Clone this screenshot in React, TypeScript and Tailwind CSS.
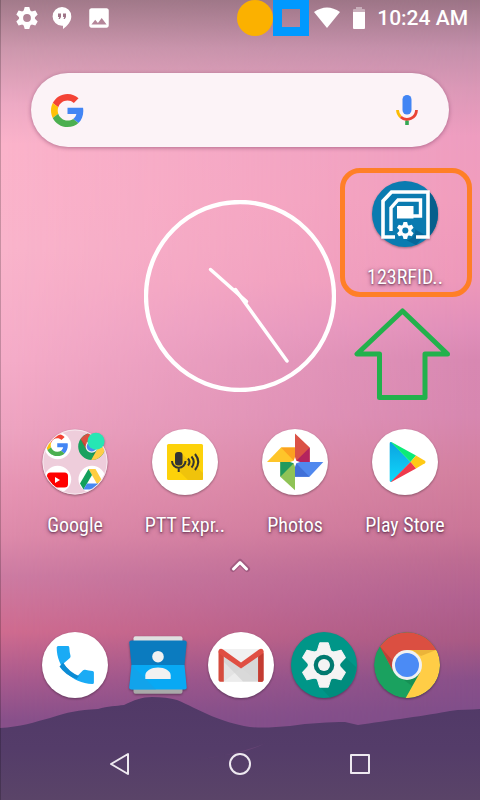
import type { ReactNode } from "react";
import { MdImage } from "react-icons/md";

interface AppEntry {
  name: string;
  icon: ReactNode;
}

const TOOTH_ANGLES = [0, 60, 120, 180, 240, 300];

function GoogleMark() {
  return (
    <>
      <path fill="#f44336" d="M24 9.5c3.54 0 6.71 1.22 9.21 3.6l6.85-6.85C35.9 2.38 30.47 0 24 0 14.62 0 6.51 5.38 2.56 13.22l7.98 6.19C12.43 13.72 17.74 9.5 24 9.5z" />
      <path fill="#4285f4" d="M46.98 24.55c0-1.57-.15-3.09-.38-4.55H24v9.02h12.94c-.58 2.96-2.26 5.48-4.78 7.18l7.73 6c4.51-4.18 7.09-10.36 7.09-17.65z" />
      <path fill="#ffc107" d="M10.53 28.59c-.48-1.45-.76-2.99-.76-4.59s.27-3.14.76-4.59l-7.98-6.19C.92 16.46 0 20.12 0 24c0 3.88.92 7.54 2.56 10.78l7.97-6.19z" />
      <path fill="#4caf50" d="M24 48c6.48 0 11.93-2.13 15.89-5.81l-7.73-6c-2.15 1.45-4.92 2.3-8.16 2.3-6.26 0-11.57-4.22-13.47-9.91l-7.98 6.19C6.51 42.62 14.62 48 24 48z" />
    </>
  );
}

function ChromeMark() {
  return (
    <>
      <circle cx="33" cy="33" r="33" fill="#1aa15f" />
      <path d="M31.7 66 46 40.5 26 45l12 9z" fill="#12804b" opacity="0.5" />
      <path d="M62.4 18A33 33 0 0 1 31.7 66L46 40.5 33 18z" fill="#ffcd46" />
      <path d="M6 14.5A33 33 0 0 1 62.4 18H33L19 39z" fill="#db4f41" />
      <path d="M6 14.5 19 38.5V29z" fill="#a83a30" opacity="0.6" />
      <path d="M62 18H38l9 6z" fill="#d99b2b" opacity="0.5" />
      <circle cx="33" cy="33" r="15" fill="#f1f1f1" />
      <circle cx="33" cy="33" r="12" fill="#4b8bf5" />
    </>
  );
}

function AppSvg({ children }: { children: ReactNode }) {
  return (
    <svg viewBox="0 0 66 66" className="size-[66px] overflow-visible drop-shadow-[0_1px_1px_rgba(0,0,0,0.35)]" aria-hidden="true">
      {children}
    </svg>
  );
}

function RfidIcon() {
  return (
    <AppSvg>
      <circle cx="33" cy="33" r="33" fill="#0a7bb0" />
      <path d="M57 10.3A33 33 0 0 1 57 55.7z" fill="#065f8c" />
      <path d="M39 46 53 54 44 64 30 57z" fill="#066799" />
      <g fill="none" stroke="#fff">
        <path d="M23 56H11V20l8.5-9H56v45H44" strokeWidth="3.6" />
        <path d="M19 50V27l7-8h22.5v16H40" strokeWidth="3.4" />
      </g>
      <path d="M25 25h16.5v12.5H25z" fill="#fff" />
      <circle cx="33.3" cy="49.5" r="10" fill="#0a7bb0" />
      <g transform="translate(33.3 49.5)">
        <g fill="#fff">
          {TOOTH_ANGLES.map((a) => (
            <path key={a} d="M-1.8-8.5h3.6L3-4H-3z" transform={`rotate(${a})`} />
          ))}
          <circle r="6" />
        </g>
        <circle r="3" fill="#0a7bb0" />
      </g>
    </AppSvg>
  );
}

function FolderIcon() {
  return (
    <AppSvg>
      <clipPath id="folder">
        <circle cx="33" cy="33" r="32" />
      </clipPath>
      <circle cx="33" cy="33" r="32.5" fill="#eecddb" />
      <g clipPath="url(#folder)">
        <circle cx="15.7" cy="16.7" r="13.5" fill="#fff" />
        <g transform="translate(4.2 5) scale(0.46)">
          <GoogleMark />
        </g>
        <g transform="translate(36.2 4) scale(0.41)">
          <ChromeMark />
        </g>
        <circle cx="15.7" cy="50.3" r="13.5" fill="#fff" />
        <rect x="5" y="43.5" width="21" height="15" rx="3.5" fill="#f00" />
        <path d="m13 48 5 3-5 3z" fill="#fff" />
        <circle cx="50" cy="50.3" r="13.5" fill="#fff" />
        <path d="M46.5 40h7l8.5 15h-7z" fill="#ffcd42" />
        <path d="m46.5 40-8.5 14.5 3.5 6 8.500-14.5z" fill="#12a05c" />
        <path d="M45 54.5h17l-3.5 6h-17z" fill="#4688f1" />
      </g>
      <circle cx="33" cy="33" r="32" fill="none" stroke="#f7e8ee" />
      <circle cx="54" cy="12.3" r="8.5" fill="#26e6b4" />
    </AppSvg>
  );
}

function PttIcon() {
  return (
    <AppSvg>
      <circle cx="33" cy="33" r="33" fill="#fff" />
      <rect x="15" y="15" width="36" height="36" rx="1.5" fill="#fdd20a" />
      <path d="M30 25 51 44v7H36l-9-9z" fill="#e8b90b" opacity="0.6" />
      <rect x="23" y="23" width="7.5" height="13.5" rx="3" fill="#333" />
      <g fill="none" stroke="#333" strokeWidth="2">
        <path d="M20 32a6.7 6.7 0 0 0 13.5 0M26.7 38.5V43" />
        <path d="M36 29.5q3 3.5 0 7M39.5 27.5q4.5 5.5 0 11M43 25q6.5 8 0 16" />
      </g>
    </AppSvg>
  );
}

function PhotosIcon() {
  return (
    <AppSvg>
      <circle cx="33" cy="33" r="33" fill="#fff" />
      <path d="M33 4.5 47.7 18.5V33H33z" fill="#db5246" />
      <path d="M47.7 18.5V33H33z" fill="#b3245e" />
      <path d="M5 33 19 18.5h14V33z" fill="#fec52a" />
      <path d="M19 18.5h14V33z" fill="#fca120" />
      <path d="M61.3 33 47.5 47.7H33V33z" fill="#5088ee" />
      <path d="M33 33v14.7h14.5z" fill="#4170d8" />
      <path d="M33 61.3 18.3 47.7V33H33z" fill="#8fc356" />
      <path d="M18.3 47.7V33H33z" fill="#219a5d" />
      <path d="m33 28 1.3 3.7L38 33l-3.7 1.3L33 38l-1.3-3.7L28 33l3.7-1.3z" fill="#fff" />
    </AppSvg>
  );
}

function PlayIcon() {
  return (
    <AppSvg>
      <linearGradient id="playBlue" x1="0" y1="0" x2="0" y2="1">
        <stop offset="0" stopColor="#0ba3e0" />
        <stop offset="1" stopColor="#10d8fb" />
      </linearGradient>
      <circle cx="33" cy="33" r="33" fill="#fff" />
      <path d="M17.7 14.5q0-2 1.8-1.2L38.5 33 19.5 52.7q-1.8.8-1.8-1.2z" fill="url(#playBlue)" />
      <path d="M18.7 13.1q.8-.2 1.6.3L44 26.5 38.5 33z" fill="#0ceb79" />
      <path d="m44 26.5 8.8 5.2q1.8 1.3 0 2.6L44 39.5 38.5 33z" fill="#ffc915" />
      <path d="M18.7 52.9q.8.2 1.6-.3L44 39.5 38.5 33z" fill="#ee3a4c" />
    </AppSvg>
  );
}

function PhoneIcon() {
  return (
    <AppSvg>
      <circle cx="33" cy="33" r="33" fill="#fff" />
      <path d="M14.7 15.500q0-1.500 1.500-1.500h9.600q1.400 0 1.500 1.400.2 4.800 1.200 8.300.3 1.300-.6 2.200L21.500 31.500q5 8.500 14 12.500l5.300-5.500q1-.9 2.300-.7 3.500.9 7.400 1.100 1.400.2 1.400 1.600v9.900q0 1.500-1.500 1.500C29.500 51.500 14.700 35 14.700 15.500z" fill="#1aabf5" />
      <path d="m21 30.500q6 9.500 16 13.500L34.500 47q-11.500-4-17-12.500z" fill="#0c8bd4" />
    </AppSvg>
  );
}

function ContactsIcon() {
  return (
    <AppSvg>
      <rect x="8.500" y="4.300" width="49" height="12" rx="2" fill="#e0e0e0" />
      <rect x="8.500" y="50" width="49" height="11.700" rx="2" fill="#a9a9a9" />
      <path d="M4.3 10.5q0-2 2-2h53.4q2 0 2 2L59.5 33h-53z" fill="#0b7bbf" />
      <path d="M6.5 33h53l2.2 22.5q0 2-2 2H6.3q-2 0-2-2z" fill="#08a9f4" />
      <path d="M6.5 33 31 57.5H6.300q-2 0-2-2z" fill="#1c9de2" opacity="0.5" />
      <circle cx="33" cy="24.7" r="5.8" fill="#f1f1f1" />
      <path d="M20.3 47v-3.5c0-4.500 6-8 12.700-8s12.700 3.500 12.700 8V47z" fill="#f1f1f1" />
    </AppSvg>
  );
}

function GmailIcon() {
  return (
    <AppSvg>
      <circle cx="33" cy="33" r="33" fill="#fff" />
      <path d="M12 17h42v32.5H12z" fill="#e3e3e3" />
      <path d="M13 17h40L33 32z" fill="#f1f1f1" />
      <path d="m33 36 17 13.5H16z" fill="#ececec" />
      <path d="M16 24v6l19 19.5h15V24L33 36z" fill="#d2d2d2" opacity="0.7" />
      <path d="M10.5 19v29q0 1.7 1.7 1.7h3.6V24zM55.5 19v29q0 1.7-1.7 1.7h-3.6V24z" fill="#d54b3d" />
      <path d="M10.5 19.5q0-2.8 2.5-2.8 1 0 2 .8l18 13 18-13q1-.8 2-.8 2.5 0 2.5 2.8-.1 1.5-1.3 2.5L33 36.5 11.8 22q-1.2-1-1.3-2.5z" fill="#e04f43" />
      <path d="M50.2 25v24.7h3.6q1.7 0 1.7-1.7V21z" fill="#c33c32" />
    </AppSvg>
  );
}

function SettingsIcon() {
  return (
    <AppSvg>
      <circle cx="33" cy="33" r="33" fill="#009688" />
      <path d="M50 21 65 35A33 33 0 0 1 39 65.5L29 55z" fill="#008577" opacity="0.6" />
      <g transform="translate(33 33)">
        <g fill="#f4f4f4" stroke="#f4f4f4" strokeWidth="1" strokeLinejoin="round">
          {TOOTH_ANGLES.map((a) => (
            <path key={a} d="M-4.3-22.2h8.6L6.5-15 9-12H-9l2.5-3z" transform={`rotate(${a})`} />
          ))}
          <circle r="15.5" />
        </g>
        <circle r="10.3" fill="#00796f" />
        <circle r="6" fill="#f4f4f4" />
      </g>
    </AppSvg>
  );
}

function ChromeIcon() {
  return (
    <AppSvg>
      <clipPath id="chromeDisc">
        <circle cx="33" cy="33" r="33" />
      </clipPath>
      <g clipPath="url(#chromeDisc)">
        <ChromeMark />
      </g>
    </AppSvg>
  );
}

const homeApps: AppEntry[] = [
  { name: "Google", icon: <FolderIcon /> },
  { name: "PTT Expr..", icon: <PttIcon /> },
  { name: "Photos", icon: <PhotosIcon /> },
  { name: "Play Store", icon: <PlayIcon /> },
];

const dockApps: AppEntry[] = [
  { name: "Phone", icon: <PhoneIcon /> },
  { name: "Contacts", icon: <ContactsIcon /> },
  { name: "Gmail", icon: <GmailIcon /> },
  { name: "Settings", icon: <SettingsIcon /> },
  { name: "Chrome", icon: <ChromeIcon /> },
];

function AppShortcut({ name, icon }: AppEntry) {
  return (
    <button className="flex w-full flex-col items-center gap-[18px]">
      {icon}
      <span className="whitespace-nowrap font-['Roboto_Condensed','Liberation_Sans_Narrow',Roboto,sans-serif] text-xl leading-6 text-white [text-shadow:0_1px_2px_rgba(60,20,50,0.6),0_1px_4px_rgba(60,20,50,0.6)]">
        {name}
      </span>
    </button>
  );
}

function StatusBar() {
  return (
    <header className="flex h-9 items-center justify-between pl-4 pr-3 text-white">
      <div className="flex items-center gap-[14px]">
        <svg viewBox="-11 -11 22 22" className="size-[22px]" aria-hidden="true">
          <path
            d="M0-8A8 8 0 1 1 0 8 8 8 0 1 1 0-8zM0-3.900A3.900 3.900 0 1 0 0 3.900 3.900 3.900 0 1 0 0-3.900z"
            fill="#fff"
            fillRule="evenodd"
          />
          {TOOTH_ANGLES.map((a) => (
            <path key={a} d="M-2.300-11h4.600L3.600-6.500H-3.600z" fill="#fff" transform={`rotate(${a})`} />
          ))}
        </svg>
        <svg viewBox="0 0 20 24" className="h-6 w-5" aria-hidden="true">
          <path d="M10 1a9.3 9.3 0 0 1 9.3 9.5c0 5-4 9.5-8.3 12.5v-3.2h-1A9.4 9.4 0 0 1 10 1z" fill="#fff" />
          <path d="M6 7.5h3v3.5l-1.2 2H6.5l.8-2H6zM11 7.5h3v3.5l-1.2 2h-1.3l.8-2H11z" fill="#9f7588" />
        </svg>
        <MdImage className="size-[26px]" />
      </div>
      <div className="flex items-center">
        <span className="size-9 rounded-full bg-[#fbb100]" />
        <span className="size-9 border-9 border-[#0099ff]" />
        <svg viewBox="0 0 26 22" className="ml-[5px] h-[22px] w-[26px]" aria-hidden="true">
          <path d="M0 5Q13-4 26 5L13 21z" fill="#fff" />
        </svg>
        <svg viewBox="0 0 12 22" className="ml-[13px] h-[22px] w-3" aria-hidden="true">
          <path d="M0 5V3q0-1 1-1h2V0h6v2h2q1 0 1 1v2z" fill="#fff" opacity="0.4" />
          <path d="M0 5h12v16q0 1-1 1H1q-1 0-1-1z" fill="#fff" />
        </svg>
        <time className="ml-3 whitespace-nowrap text-[21px] font-medium leading-6">10:24 AM</time>
      </div>
    </header>
  );
}

function SearchBar() {
  return (
    <form className="mx-[31px] mt-[37px] flex h-[74px] items-center rounded-full bg-[#fcf3f7] pl-5 pr-[27px] shadow-[0_1px_4px_rgba(80,20,60,0.4)]">
      <svg viewBox="0 0 48 48" className="size-[33px] shrink-0" aria-hidden="true">
        <GoogleMark />
      </svg>
      <input type="text" aria-label="Search" className="h-full min-w-0 flex-1 bg-transparent px-4 text-xl outline-none" />
      <button type="button" aria-label="Voice search">
        <svg viewBox="0 0 30 32" className="h-8 w-[30px]" aria-hidden="true">
          <rect x="10.5" y="1" width="9" height="19.5" rx="4.5" fill="#4285f4" />
          <g fill="none" strokeWidth="2.8">
            <path d="M5.5 16a9.5 9.5 0 0 0 3.200 7" stroke="#fbbc05" />
            <path d="M8.700 23A9.500 9.500 0 0 0 24.500 16" stroke="#ea4335" />
            <path d="M15 26.700V31" stroke="#34a853" strokeWidth="3.600" />
          </g>
        </svg>
      </button>
    </form>
  );
}

function Clock() {
  return (
    <svg viewBox="0 0 192 192" className="col-span-2 col-start-2 mt-[19px] size-48 justify-self-center" role="img" aria-label="10:24">
      <g fill="none" stroke="#fff" strokeLinecap="round">
        <circle cx="96" cy="96" r="94" strokeWidth="4.3" />
        <path d="m66.500 69.500 36 32" strokeWidth="3.5" />
        <path d="m91.500 89.500 51.500 71.500" strokeWidth="3.5" />
      </g>
    </svg>
  );
}

function Wallpaper() {
  return (
    <div className="absolute inset-0 bg-[linear-gradient(180deg,#9c7486_0%,#c48fab_6%,#db98b7_11%,#ee9dc0_17%,#f19dbd_25%,#ee98ba_35%,#e18fba_41%,#d888b2_45%,#d787b0_52%,#d3809f_59%,#cb7698_66%,#bd6b92_70%,#b16190_75%,#a95a85_80%,#89508a_85%,#804e8a_89%)]">
      {/* Pinker sky on the left, fading out towards the right edge */}
      <div className="absolute inset-0 bg-[linear-gradient(180deg,#a27a8a_0%,#cc97ac_6%,#edaac4_13%,#fbb3ca_18%,#f9b4cb_31%,#f5acc8_45%,#eda3c0_54%,#e694b3_61%,#dd8aaa_67%,#cc7ba2_72%,#cf6b8f_79%,#a85a8d_85%,#88508a_90%)] [mask-image:linear-gradient(to_right,black,transparent)]" />
      <svg viewBox="0 0 480 104" preserveAspectRatio="none" className="absolute inset-x-0 bottom-0 h-[104px] w-full" aria-hidden="true">
        <linearGradient id="hill" x1="0" y1="0" x2="0" y2="1">
          <stop offset="0" stopColor="#513967" />
          <stop offset="0.5" stopColor="#543c69" />
          <stop offset="1" stopColor="#5a4468" />
        </linearGradient>
        <path
          d="M0 32C20 31 35 26 50 22C68 16 78 14 98 13C108 10 116 10 124 9C134 4 142 1 152 1C162 1 170 2 177 4C200 14 215 24 244 30C258 33 275 31 290 30C310 27 330 26 345 26L358 29C385 25 430 19 450 15C460 13 470 14 480 13V104H0z"
          fill="url(#hill)"
        />
        <path d="M196 64Q240 58 266 47Q248 56 225 59z" fill="#7a4d80" opacity="0.5" />
      </svg>
      <div className="absolute inset-y-0 left-0 w-px bg-black/20" />
    </div>
  );
}

function NavBar() {
  return (
    <nav className="mb-3 mt-auto grid grid-cols-3 px-[60px] pt-[42px]">
      <button aria-label="Back" className="flex h-12 items-center justify-center">
        <svg viewBox="0 0 24 24" className="size-6" fill="none" stroke="#eee9f0" strokeWidth="2" strokeLinejoin="round" aria-hidden="true">
          <path d="M20 2v20L3 12z" />
        </svg>
      </button>
      <button aria-label="Home" className="flex h-12 items-center justify-center">
        <svg viewBox="0 0 24 24" className="size-6" fill="none" stroke="#eee9f0" strokeWidth="2" aria-hidden="true">
          <circle cx="12" cy="12" r="10" />
        </svg>
      </button>
      <button aria-label="Recent apps" className="flex h-12 items-center justify-center">
        <svg viewBox="0 0 24 24" className="size-6" fill="none" stroke="#eee9f0" strokeWidth="2" strokeLinejoin="round" aria-hidden="true">
          <path d="M3 3h18v18H3z" />
        </svg>
      </button>
    </nav>
  );
}

export default function App() {
  return (
    <div className="relative min-h-screen overflow-hidden font-[Roboto,sans-serif]">
      <Wallpaper />
      <div className="relative flex min-h-screen flex-col">
        <StatusBar />
        <SearchBar />

        <main className="mt-[34px] px-5">
          <section className="grid grid-cols-4 items-start">
            <Clock />
            <div className="relative">
              <AppShortcut name="123RFID.." icon={<RfidIcon />} />
              {/* Callout around the shortcut, with an arrow that points up to it */}
              <div className="pointer-events-none absolute -left-[10px] -right-3 -top-[13px] h-[129px] rounded-[20px] border-5 border-[#ff7f27]" />
              <svg viewBox="0 0 96 92" className="pointer-events-none absolute left-1 top-[127px] h-[92px] w-24" fill="none" stroke="#22b14c" strokeWidth="5" strokeLinejoin="round" aria-hidden="true">
                <path d="M48.5 3 3 46h22.5v43.5H71V46h22.5z" />
              </svg>
            </div>
          </section>

          <section className="mt-[37px] grid grid-cols-4">
            {homeApps.map((app) => (
              <AppShortcut key={app.name} {...app} />
            ))}
          </section>
        </main>

        <button aria-label="All apps" className="mt-5 self-center">
          <svg viewBox="0 0 24 16" className="h-4 w-6" fill="none" strokeLinecap="round" strokeLinejoin="round" aria-hidden="true">
            <path d="m5 12 7-7 7 7" stroke="#8a4a70" strokeOpacity="0.6" strokeWidth="6" />
            <path d="m5.500 12 6.500-6.500 6.500 6.500" stroke="#fff" strokeWidth="3" />
          </svg>
        </button>

        <div className="mt-[59px] grid grid-cols-5 pl-[34px] pr-8">
          {dockApps.map((app) => (
            <button key={app.name} aria-label={app.name} className="flex justify-center">
              {app.icon}
            </button>
          ))}
        </div>

        <NavBar />
      </div>
    </div>
  );
}
